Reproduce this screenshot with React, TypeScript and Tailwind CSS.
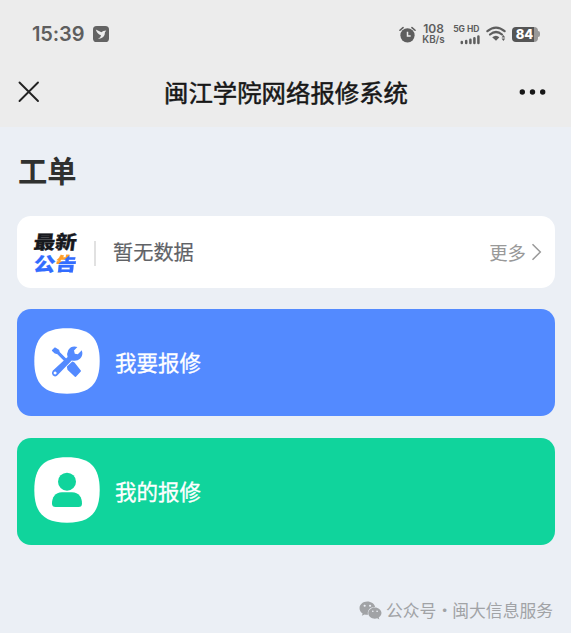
import type { ReactNode } from "react";
import { FaWeixin } from "react-icons/fa";

function AppBadge() {
  return (
    <svg className="ml-[9px] h-4 w-4" viewBox="0 0 16 16">
      <rect width="16" height="16" rx="3.6" fill="#636363" />
      <path d="M2.8 3.4 8.4 6.2Q9.6 4.4 13.3 4.4L12 6.2Q12 12.2 5 13 8 11.4 8 9.3 4.2 8 2.8 3.4Z" fill="#ececec" />
    </svg>
  );
}

function StatusBar() {
  return (
    <div className="flex h-[68px] items-center pl-8 text-[#5e5e5e]">
      <span className="w-[51.5px] whitespace-nowrap font-[Inter,sans-serif] text-[20px] font-semibold leading-none tracking-[-0.1px]">15:39</span>
      <AppBadge />
      <svg className="ml-[290px] h-[17px] w-[17px]" viewBox="0 0 16 16">
        <circle cx="8" cy="8.8" r="6.7" fill="#5e5e5e" />
        <path d="M.9 4 3.8 1.5M12.2 1.5l2.9 2.5" stroke="#5e5e5e" strokeWidth="1.5" strokeLinecap="round" />
        <path d="M8 5.4v4h3" fill="none" stroke="#ececec" strokeWidth="1.4" />
      </svg>
      <div className="ml-[6px] flex w-6 flex-col items-center whitespace-nowrap font-[Inter,sans-serif] font-semibold">
        <div className="text-[12px] leading-[12px]">108</div>
        <div className="text-[9.8px] leading-[10px]">KB/s</div>
      </div>
      <div className="ml-[7px] flex w-[27px] flex-col items-end font-[Inter,sans-serif] font-bold">
        <div className="whitespace-nowrap text-[8.5px] leading-[11px]">5G HD</div>
        <svg className="h-[10px] w-[20px]" viewBox="0 0 20 10">
          <path d="M1.8 7v1M6.2 6v2M10.4 4.7V8M14.4 3.2V8M18.4 1.6V8" stroke="#5e5e5e" strokeWidth="2.5" strokeLinecap="round" />
        </svg>
      </div>
      <svg className="ml-[6px] h-4 w-[21px]" viewBox="0 0 21 16">
        <path d="M1.4 5.2Q10 -2 18.6 5.2M4 8.5Q10 3.5 16 8.5" fill="none" stroke="#5e5e5e" strokeWidth="2.2" strokeLinecap="round" />
        <path d="M6.2 11.2Q10 8.2 13.4 11.2L10 14.8Z" fill="#5e5e5e" />
        <path d="m15.6 11.4 1.8-2.4 1.8 2.4zM15.6 12.6h3.6l-1.8 2.4z" fill="#5e5e5e" />
      </svg>
      <div className="ml-[5px] flex items-center">
        <div className="flex h-[15px] w-[26px] items-center justify-center rounded-[4px] bg-[linear-gradient(to_right,#555_0_22px,#999_22px)] font-[Inter,sans-serif] text-[13px] font-extrabold leading-[15px] text-white">84</div>
        <div className="h-[6px] w-[2px] rounded-r-full bg-[#999]" />
      </div>
    </div>
  );
}

function Tile({ children }: { children: ReactNode }) {
  return (
    <svg className="h-[66px] w-[66px] shrink-0" viewBox="0 0 66 66">
      <path d="M33 .3C56 .3 65.7 10 65.7 33S56 65.7 33 65.7 .3 56 .3 33 10 .3 33 .3Z" fill="white" />
      {children}
    </svg>
  );
}

function ToolsIcon() {
  return (
    <g fill="#538aff">
      <path d="M18.5 22.5 21 20 24.6 22.2 25.2 24.4 33 32.2 31.6 33.6 23.8 25.8 21.2 25Z" stroke="#538aff" strokeWidth="1.2" strokeLinejoin="round" />
      <path d="m33.8 38.8 4.8-4.4 1.4.9 6.1 7.7-4.6 5-7.2-6.6Z" stroke="#538aff" strokeWidth="1.8" strokeLinejoin="round" />
      <path fillRule="evenodd" d="M43.4 19Q37.5 17.2 34.3 22 32.4 25.7 33.6 29L18.7 42.8Q17 45.3 18.7 47.3 20.9 49.4 23.2 47.4L37.7 32.4Q42.8 33.8 46 30.8 49.5 27.3 47.8 22.3L43.8 26.3 40.8 25.7 40 22.6ZM21.1 43.5a1.5 1.5 0 1 0 .01 0" />
    </g>
  );
}

function PersonIcon() {
  return (
    <g fill="#10d49c">
      <circle cx="33" cy="24.7" r="9" />
      <path d="M28 35.2H38C45 35.2 48 40.5 48 46.5Q48 50 44.5 50H21.5Q18 50 18 46.5C18 40.5 21 35.2 28 35.2Z" />
    </g>
  );
}

export default function App() {
  return (
    <div className="flex h-[633px] w-[571px] flex-col overflow-hidden bg-[#ebeff5] font-['Noto_Sans_CJK_SC',sans-serif]">
      <header className="h-[127px] shrink-0 bg-[#ececec]">
        <StatusBar />
        <div className="flex h-12 items-center justify-between pl-[18px] pr-[25px]">
          <svg className="h-[22px] w-[22px]" viewBox="0 0 22 22">
            <path d="m1.5 1.5 18.5 18.5M20 1.5 1.5 20" stroke="#222" strokeWidth="1.9" strokeLinecap="round" />
          </svg>
          <h1 className="ml-[13px] whitespace-nowrap text-[24.4px] font-normal leading-none text-[#171717] [-webkit-text-stroke:0.5px_#171717]">闽江学院网络报修系统</h1>
          <svg className="h-6 w-[27px]" viewBox="0 0 27 24">
            <g fill="#171717"><circle cx="3.3" cy="12" r="2.7" /><circle cx="13.5" cy="12" r="2.7" /><circle cx="23.7" cy="12" r="2.7" /></g>
          </svg>
        </div>
      </header>
      <main className="flex flex-1 flex-col pl-[17px] pr-4">
        <h2 className="flex h-[89px] items-center pb-[3px] pl-px text-[29.3px] font-bold leading-none text-[#303130]">工单</h2>
        <section className="flex h-[72px] shrink-0 items-center rounded-[14px] bg-white pl-[17px] pr-[13px]">
          <div className="w-[44px] whitespace-nowrap text-[21.5px] font-black leading-[22px]">
            <div className="-skew-x-6 scale-y-[0.88] text-[#17191e] [-webkit-text-stroke:0.3px_#17191e]">最新</div>
            <div className="flex -skew-x-6 scale-y-[0.88] text-[#316cff]">
              <span className="[-webkit-text-stroke:0.3px_#316cff]">公</span>
              <span className="bg-[linear-gradient(135deg,#ff9f27_0_34%,#316cff_35%)] bg-clip-text text-transparent [-webkit-text-stroke:0.3px_transparent]">告</span>
            </div>
          </div>
          <div className="ml-[16px] mt-[3px] h-[25px] w-[2px] bg-[#e1e1e1]" />
          <span className="ml-[17px] text-[20.2px] leading-none text-[#606266] [-webkit-text-stroke:0.2px_#606266]">暂无数据</span>
          <span className="ml-auto text-[18.4px] leading-none text-[#999]">更多</span>
          <svg className="ml-1 h-[18px] w-3" viewBox="0 0 12 18">
            <path d="m2.5 1.2 7.8 7.8-7.8 7.8" fill="none" stroke="#999" strokeWidth="1.5" />
          </svg>
        </section>
        <section className="mt-[21px] flex h-[107px] shrink-0 items-center rounded-[14px] bg-[#538aff] pb-[3px] pl-[17px]">
          <Tile><ToolsIcon /></Tile>
          <span className="ml-[15px] mt-[2px] text-[21.5px] font-normal leading-none text-white [-webkit-text-stroke:0.3px_white]">我要报修</span>
        </section>
        <section className="mt-[22px] flex h-[107px] shrink-0 items-center rounded-[14px] bg-[#10d49c] pb-[3px] pl-[17px]">
          <Tile><PersonIcon /></Tile>
          <span className="ml-[15px] mt-[2px] text-[21.5px] font-normal leading-none text-white [-webkit-text-stroke:0.3px_white]">我的报修</span>
        </section>
        <footer className="mt-[53px] flex h-6 items-center justify-end whitespace-nowrap pr-[2px] text-[16.8px] leading-none text-[#a1a3a6]">
          <FaWeixin className="mr-[4px] h-[23px] w-[23px]" />
          <span>公众号</span>
          <span className="w-4 text-center">·</span>
          <span>闽大信息服务</span>
        </footer>
      </main>
    </div>
  );
}
